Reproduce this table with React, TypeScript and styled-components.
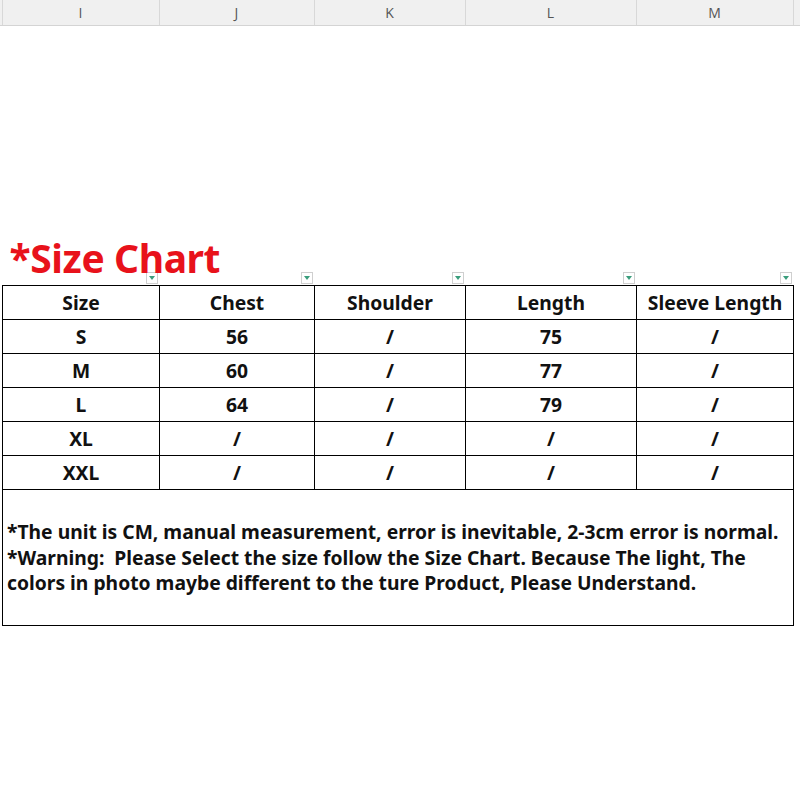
import React from "react";
import styled, { createGlobalStyle } from "styled-components";

const Global = createGlobalStyle`
  html, body { margin: 0; padding: 0; background: #fff; }
  body { font-family: "Noto Sans", "Open Sans", sans-serif; }
`;

const COLS = "2.5px 157px 155px 151px 171px 157px 1fr";

const Page = styled.div`
  width: 800px;
  height: 800px;
  background: #fff;
  display: flex;
  flex-direction: column;
`;

const ColHeader = styled.div`
  display: grid;
  grid-template-columns: ${COLS};
  height: 26px;
  background: #f0f0f0;
  border-bottom: 1px solid #d4d4d4;
  box-sizing: border-box;
`;

const ColLetter = styled.div`
  display: flex;
  align-items: center;
  justify-content: center;
  border-right: 1px solid #d8d8d8;
  font-family: "Open Sans", "Noto Sans", sans-serif;
  font-size: 14px;
  color: #555;
  &:last-child { border-right: none; }
`;

const TitleRow = styled.div`
  margin-top: 210px;
  display: grid;
  grid-template-columns: ${COLS};
  height: 49px;
`;

const TitleCell = styled.div`
  position: relative;
  display: flex;
  align-items: flex-end;
  justify-content: flex-end;
  padding: 0 2px 1px 0;
`;

const Title = styled.h1`
  position: absolute;
  left: 7px;
  top: -5px;
  margin: 0;
  white-space: nowrap;
  font-family: "Noto Sans", sans-serif;
  font-size: 39px;
  font-weight: 700;
  color: #e8121b;
  letter-spacing: -0.4px;
`;

const Filter = styled.span`
  width: 12px;
  height: 12px;
  box-sizing: border-box;
  border: 1px solid #cfcfcf;
  background: #fff;
  display: flex;
  align-items: center;
  justify-content: center;
  &::after {
    content: "";
    border-left: 3px solid transparent;
    border-right: 3px solid transparent;
    border-top: 4px solid #3a9d7c;
  }
`;

const Table = styled.table`
  margin-left: 2px;
  border-collapse: collapse;
  table-layout: fixed;
  width: 791px;
  font-family: "Noto Sans", sans-serif;
  font-weight: 700;
  font-size: 19.3px;
  color: #111;
`;

const Cell = styled.td`
  border: 1px solid #000;
  height: 33px;
  padding: 0;
  text-align: center;
  vertical-align: middle;
  line-height: 1;
`;

const NoteCell = styled.td`
  border: 1px solid #000;
  height: 135px;
  padding: 0 0 0 4px;
  text-align: left;
  vertical-align: middle;
  font-size: 19.3px;
  line-height: 25.5px;
  white-space: nowrap;
`;

const header = ["Size", "Chest", "Shoulder", "Length", "Sleeve Length"];
const rows = [
  ["S", "56", "/", "75", "/"],
  ["M", "60", "/", "77", "/"],
  ["L", "64", "/", "79", "/"],
  ["XL", "/", "/", "/", "/"],
  ["XXL", "/", "/", "/", "/"],
];
const widths = [157, 155, 151, 171, 157];

export default function App() {
  return (
    <Page>
      <Global />
      <ColHeader>
        <ColLetter />
        {["I", "J", "K", "L", "M"].map((l) => (
          <ColLetter key={l}>{l}</ColLetter>
        ))}
        <ColLetter />
      </ColHeader>
      <TitleRow>
        <div />
        {header.map((h, i) => (
          <TitleCell key={h}>
            {i === 0 && <Title>*Size Chart</Title>}
            <Filter />
          </TitleCell>
        ))}
        <div />
      </TitleRow>
      <Table>
        <colgroup>
          {widths.map((w, i) => (
            <col key={i} style={{ width: w }} />
          ))}
        </colgroup>
        <tbody>
          <tr>
            {header.map((h) => (
              <Cell key={h}>{h}</Cell>
            ))}
          </tr>
          {rows.map((r) => (
            <tr key={r[0]}>
              {r.map((v, i) => (
                <Cell key={i}>{v}</Cell>
              ))}
            </tr>
          ))}
          <tr>
            <NoteCell colSpan={5}>
              *The unit is CM, manual measurement, error is inevitable, 2-3cm error is normal.
              <br />
              *Warning:&nbsp; Please Select the size follow the Size Chart. Because The light, The
              <br />
              colors in photo maybe different to the ture Product, Please Understand.
            </NoteCell>
          </tr>
        </tbody>
      </Table>
    </Page>
  );
}
